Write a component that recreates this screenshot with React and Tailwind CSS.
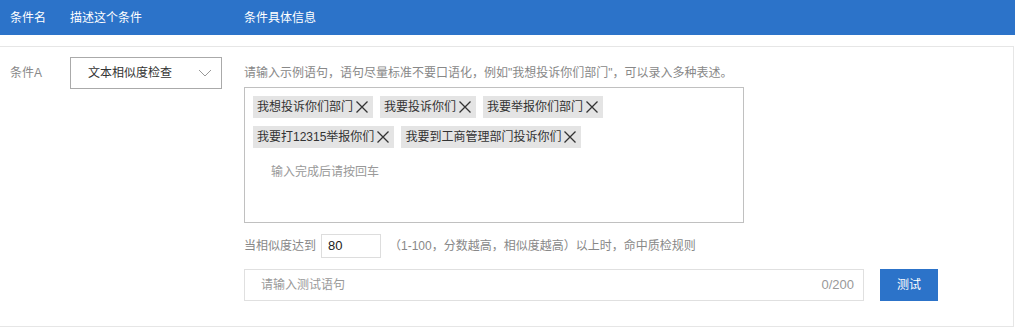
import React from "react";

const font = { fontFamily: '"Liberation Sans", "Noto Sans CJK SC", sans-serif' };

const samples = [
  "我想投诉你们部门",
  "我要投诉你们",
  "我要举报你们部门",
  "我要打12315举报你们",
  "我要到工商管理部门投诉你们",
];

function CloseIcon() {
  return (
    <svg width="14" height="14" viewBox="0 0 14 14" className="ml-[2px] shrink-0">
      <path d="M1.5 1.5 L12.5 12.5 M12.5 1.5 L1.5 12.5" stroke="#333" strokeWidth="1.3" fill="none" />
    </svg>
  );
}

function Tag({ text }) {
  return (
    <div className="flex items-center h-[22px] px-[4px] bg-[#e4e4e4] text-[12px] text-[#333] leading-[22px]">
      <span>{text}</span>
      <CloseIcon />
    </div>
  );
}

export default function App() {
  return (
    <div className="w-[1015px] h-[328px] bg-white" style={font}>
      <div className="flex items-center h-[35px] bg-[#2c73c9] text-white text-[12px]">
        <div className="w-[70px] pl-[10px]">条件名</div>
        <div className="w-[174px]">描述这个条件</div>
        <div>条件具体信息</div>
      </div>

      <div className="mt-[11px] w-[1014px] h-[281px] border-t border-r border-b border-[#e6e6e6] flex">
        <div className="w-[70px] pl-[10px] pt-[18px] text-[12px] text-[#888] leading-[16px]">条件A</div>

        <div className="w-[174px] pt-[10px]">
          <div className="w-[152px] h-[32px] border border-[#aaa] flex items-center justify-between pl-[17px] pr-[9px]">
            <span className="text-[12px] text-[#333]">文本相似度检查</span>
            <svg width="14" height="8" viewBox="0 0 14 8">
              <polyline points="1,1 7,7 13,1" stroke="#999" strokeWidth="1" fill="none" />
            </svg>
          </div>
        </div>

        <div className="flex-1 pt-[18px]">
          <div className="text-[12px] text-[#888] leading-[16px]">
            请输入示例语句，语句尽量标准不要口语化，例如"我想投诉你们部门"，可以录入多种表述。
          </div>

          <div className="mt-[6px] w-[500px] h-[136px] border border-[#c0c0c0] p-[8px]">
            <div className="flex flex-wrap gap-x-[7px] gap-y-[8px]">
              {samples.map((s) => (
                <Tag key={s} text={s} />
              ))}
            </div>
            <div className="mt-[8px] h-[32px] flex items-center pl-[18px] text-[12px] text-[#999]">
              输入完成后请按回车
            </div>
          </div>

          <div className="mt-[11px] flex items-center text-[12px] text-[#888]">
            <span>当相似度达到</span>
            <div className="ml-[5px] w-[60px] h-[24px] border border-[#ddd] flex items-center pl-[6px] text-[13px] text-[#222]">
              80
            </div>
            <span className="ml-[8px]">（1-100，分数越高，相似度越高）以上时，命中质检规则</span>
          </div>

          <div className="mt-[11px] flex items-center">
            <div className="w-[620px] h-[32px] border border-[#e0e0e0] flex items-center justify-between pl-[16px] pr-[9px]">
              <span className="text-[12px] text-[#999]">请输入测试语句</span>
              <span className="text-[13px] text-[#999]">0/200</span>
            </div>
            <button className="ml-[16px] w-[58px] h-[32px] bg-[#2c73c9] text-white text-[12px]">测试</button>
          </div>
        </div>
      </div>
    </div>
  );
}
